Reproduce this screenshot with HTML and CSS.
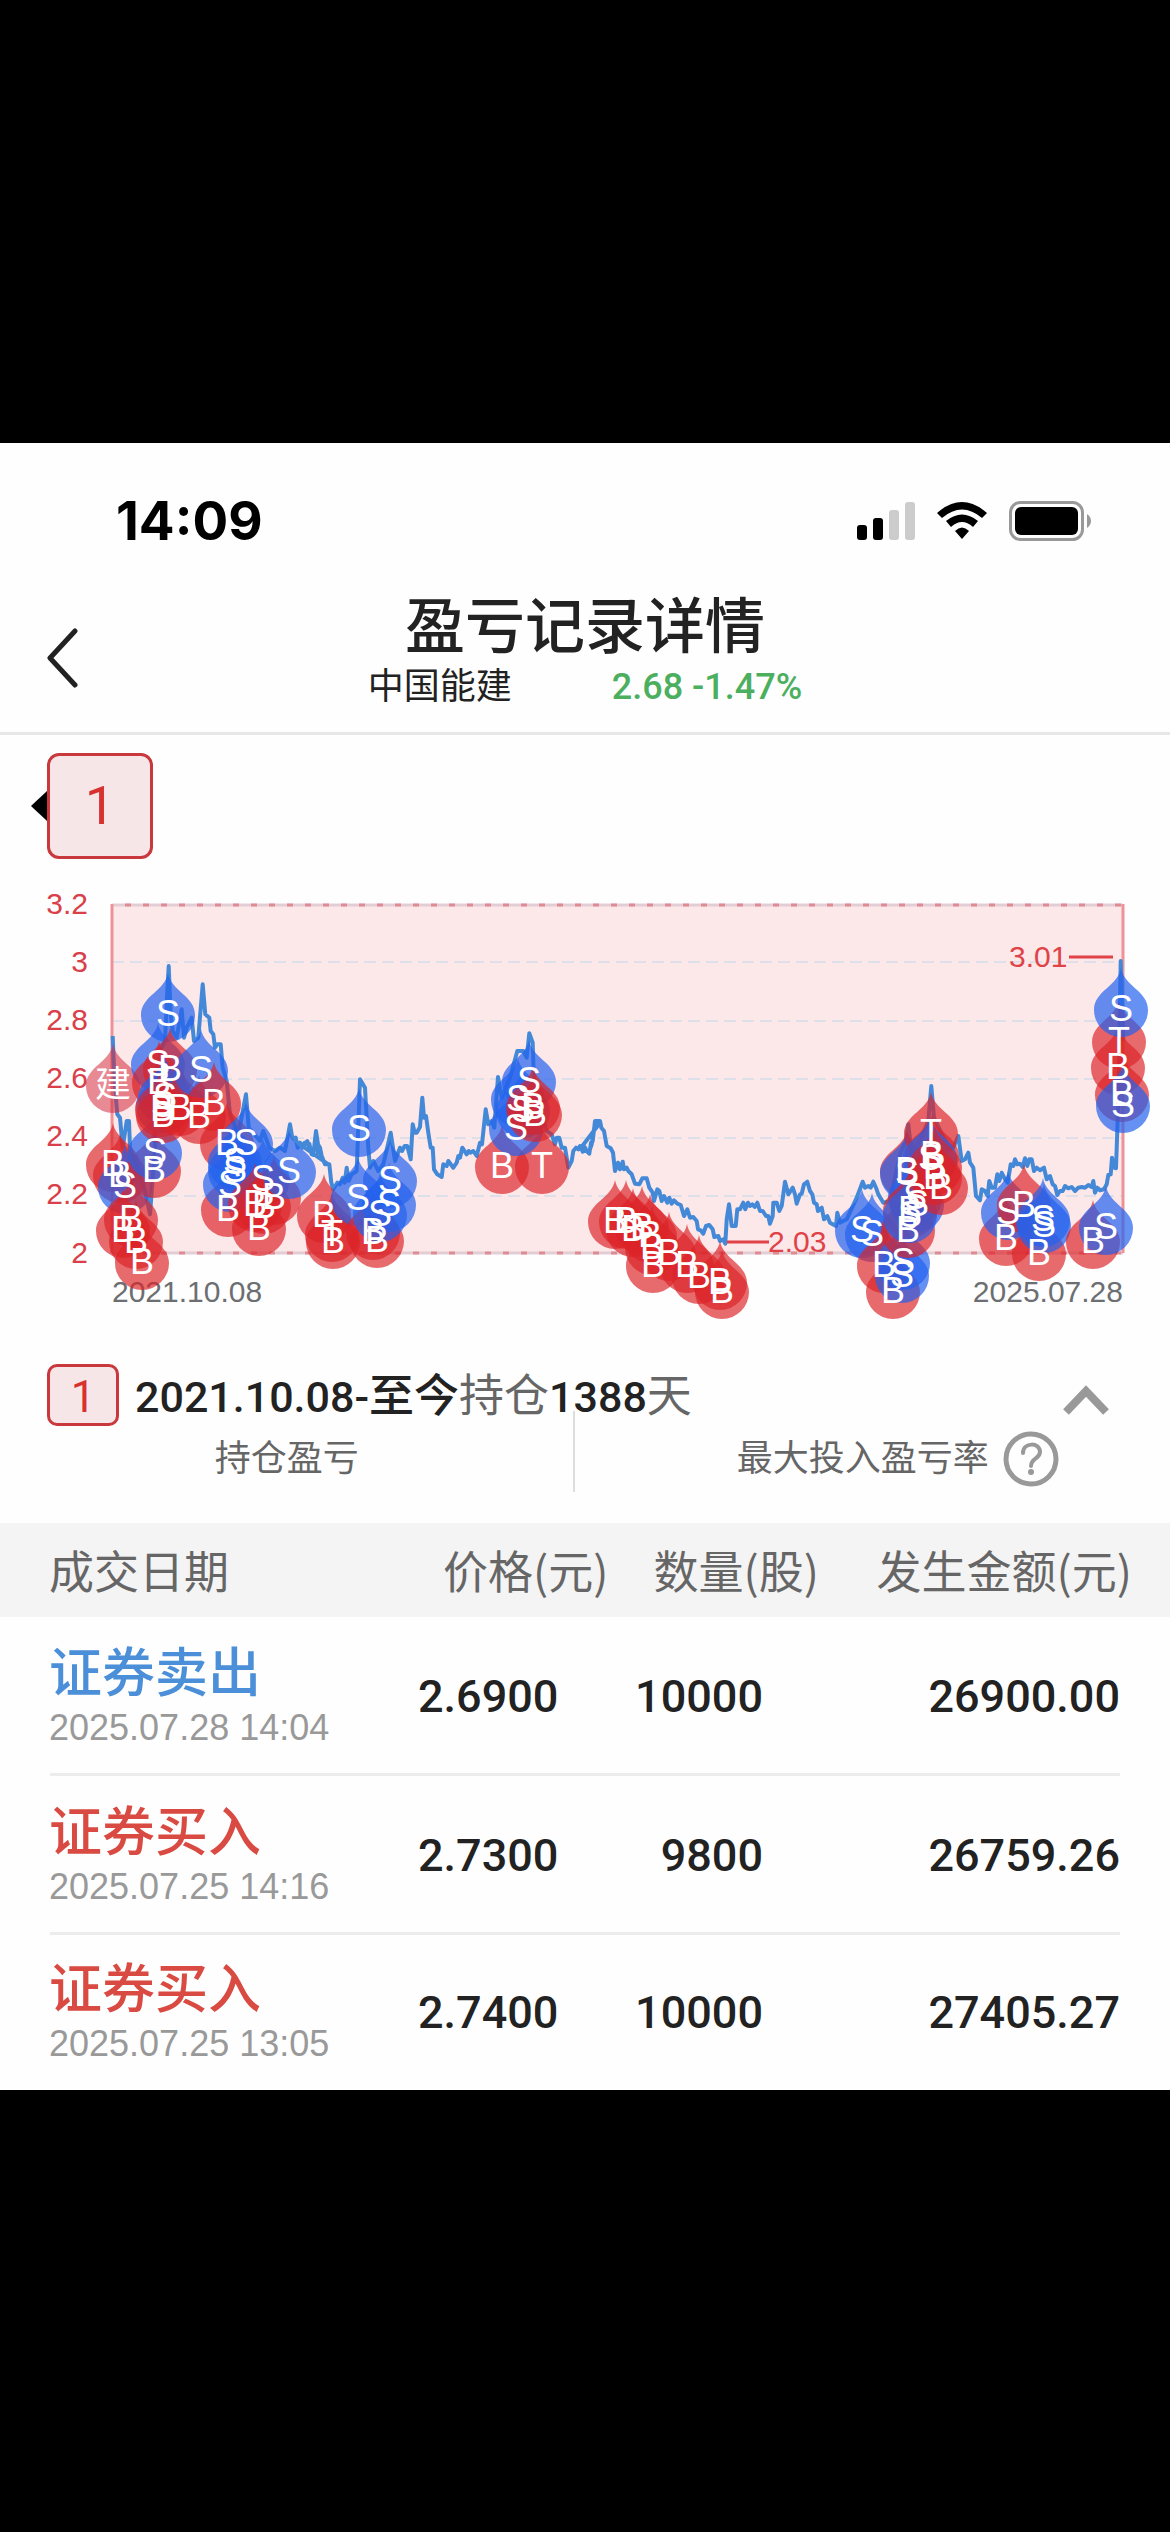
FILE: index.html
```html
<!DOCTYPE html>
<html lang="zh-CN">
<head>
<meta charset="utf-8">
<meta name="viewport" content="width=device-width, initial-scale=1">
<title>盈亏记录详情</title>
<link rel="stylesheet" href="styles.css">
</head>
<body>
<main class="screen">
  <div class="status">
    <span class="clock">14:09</span>
    <div class="status-icons">
      <svg width="58" height="38" viewBox="0 0 58 38" aria-hidden="true">
        <rect x="0" y="23" width="10" height="15" rx="3"/>
        <rect x="16" y="16" width="10" height="22" rx="3"/>
        <rect x="32" y="8" width="10" height="30" rx="3" fill="#ccc"/>
        <rect x="48" y="0" width="10" height="38" rx="3" fill="#ccc"/>
      </svg>
      <svg width="50" height="38" viewBox="0 0 50 38" aria-hidden="true">
        <path d="M0 11 Q25 -11 50 11 L45 16 Q25 -1 5 16Z"/>
        <path d="M9 19 Q25 6 41 19 L36 25 Q25 15 14 25Z"/>
        <path d="M18 29 Q25 22 32 29 L25 37Z"/>
      </svg>
      <svg width="82" height="40" viewBox="0 0 82 40" aria-hidden="true">
        <rect x="1.5" y="1.5" width="72" height="37" rx="10" fill="none" stroke="#999" stroke-width="3"/>
        <rect x="6" y="6" width="63" height="28" rx="6"/>
        <path d="M78 13 Q82 16 82 20 Q82 24 78 27Z" fill="#999"/>
      </svg>
    </div>
  </div>

  <header class="nav">
    <button class="back" aria-label="返回">
      <svg width="32" height="60" viewBox="0 0 32 60" aria-hidden="true"><path d="M29 3 L4 30 L29 57" fill="none" stroke="#222" stroke-width="5" stroke-linecap="round" stroke-linejoin="round"/></svg>
    </button>
    <div class="heading">
      <h1>盈亏记录详情</h1>
      <p class="stock"><span>中国能建</span><span class="quote">2.68 -1.47%</span></p>
    </div>
  </header>

  <div class="periods">
    <svg width="16" height="30" viewBox="0 0 16 30" aria-hidden="true"><path d="M16 0 V30 L0 15Z"/></svg>
    <button class="period">1</button>
  </div>

  <svg class="chart" viewBox="0 870 1170 460" role="img" aria-label="持仓走势">
    <defs>
      <path id="drop" d="M0 -40 C3 -22 27 -17 27 2 A27 27 0 0 1 -27 2 C-27 -17 -3 -22 0 -40Z"/>
    </defs>
    <rect class="plot" x="112" y="903" width="1011" height="349"/>
    <g class="grid">
      <path d="M112 961H1123M112 1020H1123M112 1078H1123M112 1137H1123M112 1195H1123"/>
    </g>
    <path class="edge" d="M112 904H1123M112 1252H1123"/>
    <path class="edge-dash" d="M125 904H1123M125 1252H1123"/>
    <path class="side" d="M112 903V1252M1123 903V1252"/>
    <g class="scale">
      <text x="88" y="913">3.2</text>
      <text x="88" y="971">3</text>
      <text x="88" y="1029">2.8</text>
      <text x="88" y="1087">2.6</text>
      <text x="88" y="1145">2.4</text>
      <text x="88" y="1203">2.2</text>
      <text x="88" y="1262">2</text>
    </g>
    <g class="dates">
      <text x="112" y="1301">2021.10.08</text>
      <text x="1123" y="1301" text-anchor="end">2025.07.28</text>
    </g>
    <polyline class="price" id="price"/>
    <g class="extreme">
      <path d="M1069 956H1113M727 1241H769"/>
      <text x="1009" y="966">3.01</text>
      <text x="768" y="1251">2.03</text>
    </g>
    <g id="drops"></g>
    <g class="letters" id="letters"></g>
  </svg>

  <section class="position">
    <div class="position-head">
      <span class="badge">1</span>
      <h2><b>2021.10.08-<span class="han">至今</span></b><span class="han">持仓</span><b>1388</b><span class="han">天</span></h2>
      <button class="fold" aria-label="收起">
        <svg width="48" height="32" viewBox="0 0 48 32" aria-hidden="true"><path d="M4 28 L24 7 L44 28" fill="none" stroke="#999" stroke-width="8"/></svg>
      </button>
    </div>
    <div class="totals">
      <div class="total">持仓盈亏</div>
      <div class="total total-rate">最大投入盈亏率
        <button class="help" aria-label="说明">
          <svg width="56" height="56" viewBox="0 0 56 56" fill="none" stroke="#999" aria-hidden="true"><circle cx="28" cy="28" r="25" stroke-width="5"/><path d="M20 22 C20 11 37 11 37 21 C37 28 28 27 28 35" stroke-width="4" stroke-linecap="round"/><circle cx="28" cy="41" r="3" fill="#999" stroke="none"/></svg>
        </button>
      </div>
    </div>
  </section>

  <table class="deals">
    <colgroup><col class="c-date"><col class="c-price"><col class="c-count"><col class="c-sum"></colgroup>
    <thead>
      <tr><th>成交日期</th><th>价格(元)</th><th>数量(股)</th><th>发生金额(元)</th></tr>
    </thead>
    <tbody>
      <tr><td><span class="kind sell">证券卖出</span><time>2025.07.28 14:04</time></td><td>2.6900</td><td>10000</td><td>26900.00</td></tr>
      <tr><td><span class="kind buy">证券买入</span><time>2025.07.25 14:16</time></td><td>2.7300</td><td>9800</td><td>26759.26</td></tr>
      <tr><td><span class="kind buy">证券买入</span><time>2025.07.25 13:05</time></td><td>2.7400</td><td>10000</td><td>27405.27</td></tr>
    </tbody>
  </table>
</main>
<script src="chart.js"></script>
</body>
</html>
```

FILE: styles.css
```css
* { box-sizing: border-box; }

body {
  margin: 0;
  min-height: 100vh;
  display: flex;
  flex-direction: column;
  justify-content: center;
  background: #000;
  color: #222;
  font-family: Roboto, "Noto Sans CJK SC", sans-serif;
}

h1, h2, p { margin: 0; font-weight: 400; }

button {
  padding: 0;
  border: 0;
  background: none;
  color: inherit;
  font: inherit;
}

svg { display: block; flex: none; }

.screen { background: #fefefe; }

.status {
  display: flex;
  justify-content: space-between;
  align-items: center;
  padding: 42px 79px 0 116px;
}

.clock {
  color: #000;
  font: 700 53px/72px Inter, sans-serif;
}

.status-icons {
  display: flex;
  align-items: center;
  gap: 22px;
}

.nav {
  display: grid;
  grid-template-columns: 1fr auto 1fr;
  align-items: center;
  padding: 28px 46px 17px;
  border-bottom: 3px solid #e7e7e7;
}

.back {
  justify-self: start;
  padding-top: 16px;
}

.heading { text-align: center; }

h1 {
  font-family: "Noto Sans CJK SC", sans-serif;
  font-size: 60px;
  font-weight: 500;
  line-height: 74px;
}

.stock {
  display: flex;
  justify-content: center;
  gap: 100px;
  font-size: 36px;
  line-height: 56px;
}

.quote { color: #4caf5f; font-weight: 500; }

.periods {
  display: flex;
  align-items: center;
  padding: 18px 31px 12px;
}

.period, .badge {
  border: 3px solid #c8383c;
  background: #f6e6e8;
  color: #d8322f;
  text-align: center;
}

.period {
  width: 106px;
  height: 106px;
  border-radius: 12px;
  font-size: 54px;
}

.chart {
  width: 100%;
  height: auto;
  font-family: "Liberation Sans", "Noto Sans CJK SC", sans-serif;
  font-size: 30px;
}

.plot { fill: #fce7e9; }
.grid { fill: none; stroke: #dde0e9; stroke-width: 2; stroke-dasharray: 12 6; }
.edge { fill: none; stroke: #e3cdd4; stroke-width: 3; }
.edge-dash { fill: none; stroke: #df8b93; stroke-width: 3; stroke-dasharray: 6 12; }
.side { fill: none; stroke: #ef9297; stroke-width: 3; }
.scale { fill: #d9404a; text-anchor: end; }
.dates { fill: #6c6e72; }
.price { fill: none; stroke: #4489d8; stroke-width: 4; stroke-linejoin: round; }
.extreme { fill: #df4348; }
.extreme path { stroke: #df4348; stroke-width: 3; }
.drop-s { fill: #2463ee; fill-opacity: .7; }
.drop-b { fill: #dc2428; fill-opacity: .68; }
.drop-open { fill: #d42a3a; fill-opacity: .55; }
.letters { fill: #fff; font-size: 36px; text-anchor: middle; }

.position { padding: 33px 47px 31px; }

.position-head {
  display: flex;
  align-items: center;
  gap: 16px;
  height: 62px;
}

.badge {
  width: 72px;
  height: 62px;
  border-radius: 10px;
  font-size: 44px;
  line-height: 60px;
}

h2 {
  flex: 1;
  color: #666;
  font-size: 43px;
  line-height: 62px;
}

h2 b { color: #222; font-weight: 500; }
.han { font-family: "Noto Sans CJK SC", sans-serif; font-size: 45px; }
.fold { margin: 10px 13px 0 0; }

.totals {
  display: flex;
  margin: 0 -47px;
  color: #666;
  font-size: 36px;
  line-height: 66px;
}

.total {
  display: flex;
  flex: 1 1 0;
  justify-content: center;
  align-items: center;
  height: 66px;
}

.total:first-child { flex-grow: 0; flex-basis: 49%; }

.total-rate {
  gap: 14px;
  height: 81px;
  margin-top: -15px;
  padding: 15px 0 0 50px;
  border-left: 2px solid #ddd;
}

.deals {
  width: 100%;
  table-layout: fixed;
  border-collapse: collapse;
}

.c-date { width: 31%; }
.c-price { width: 21%; }
.c-count { width: 18%; }
.c-sum { width: 30%; }

.deals th {
  height: 94px;
  padding: 0;
  background: #f4f4f4;
  color: #666;
  font: 400 45px/60px "Noto Sans CJK SC", sans-serif;
  text-align: right;
}

.deals th:first-child, .deals td:first-child { padding-left: 49px; text-align: left; }
.deals th:last-child { padding-right: 38px; }

.deals td {
  height: 159px;
  padding: 0 50px 0 0;
  font-size: 45px;
  font-weight: 500;
  text-align: right;
}

.deals td:nth-child(3) { padding-right: 56px; }
.deals td:first-child { padding-right: 0; }

.deals tbody tr:not(:last-child) {
  background: linear-gradient(#ececec, #ececec) no-repeat 50% 100% / calc(100% - 100px) 3px;
}

.deals tr:last-child td { height: 155px; }

.kind {
  display: block;
  font-size: 53px;
  line-height: 64px;
}

.sell { color: #4a8fd8; }
.buy { color: #d94b42; }

time {
  display: block;
  color: #999;
  font: 400 36px/44px "Liberation Sans", sans-serif;
  white-space: nowrap;
}
```

FILE: chart.js
```js
const NS = 'http://www.w3.org/2000/svg';

// Price trace: each run has an origin and its points in thirds of a unit.
const runs = [
  [30, 880, [248,465,252,560,255,620,262,700,270,710,278,800,290,720,297,720,300,800,320,860,345,930,360,1000,375,800,380,560,395,500,405,480,412,330,416,255,422,400,428,450,440,470,455,385,462,470,470,440,485,410,492,480,505,470,518,310,526,400,538,410,542,450,550,460,555,500,562,490,572,490,578,560,590,600,600,700,625,760,648,640,656,740,690,780,700,750,718,800,735,810,750,800,765,810,780,730,786,765,792,775,797,770,803,800,810,785,820,795,832,780,838,800,850,822,858,750,864,790,870,800,875,825,885,850,895,850]],
  [300, 1000, [0,430,8,440,14,425,20,430,28,428,35,460,41,450,48,395,54,455,60,455,75,490,88,490,94,545,100,565,112,545,120,550,128,530,134,545,140,500,146,540,155,520,170,510,180,235,195,260,205,440,210,500,220,480,235,510,250,490,272,395,285,480,300,440,306,450,314,435,322,435,332,475,338,370,344,395,350,395,360,378,367,290,372,350,378,345,385,395,392,440,398,440,402,505,412,520,425,528,430,490,440,495,445,480,452,490,460,500,470,485,475,465,480,470,487,440,500,460,506,450,512,455,520,450,530,465,540,425,546,430,557,325,565,370,575,360,583,380,594,228,605,290,630,230,652,150,670,150,680,170,688,97,698,125,702,250,720,320,740,390,755,400,765,430,770,410,778,410,785,440,795,440,805,500,815,480,820,450,828,440,835,445,840,435,850,450,868,450,875,430,885,365,900,365]],
  [580, 1060, [3,260,8,272,14,258,20,270,28,278,33,245,38,240,45,180,60,180,64,200,72,210,80,255,92,262,99,275,105,330,114,305,120,325,128,302,132,325,140,320,145,330,155,340,165,368,178,370,187,352,200,352,208,380,218,395,222,420,232,385,238,390,245,420,252,405,262,425,268,410,275,428,282,418,292,428,302,432,312,465,322,445,330,470,340,468,350,480,354,505,362,508,370,518,378,495,388,492,398,505,403,528,415,525,420,540,430,535,436,548,440,475,447,430,455,495,467,495,472,445,480,445,490,425,496,445,504,425,510,435,517,430,524,438,532,425,540,450,548,450,558,465,565,465,570,488,578,465,580,425,590,425,598,450,605,435,615,362,625,400,638,380,645,400,650,428,660,400,665,398,672,370,682,362,690,390,697,400,702,425,710,430,714,450,725,440,732,475,742,465,750,485,768,495,772,455,780,485,790,480,800,475,830,410,848,362,855,380,865,375,872,380,880,362,888,380,895,400]],
  [820, 900, [190,905,210,900,240,760,258,720,265,670,275,760,300,720,325,660,334,555,342,650,380,730,400,740,415,705,425,780,435,775,445,755,450,785,460,800,468,885,480,898,485,865,495,870,503,885,508,840,515,860,525,860,532,820,538,840,545,815,555,835,563,845,572,790,580,795,585,775,592,790,600,788,608,798,615,772,622,795,628,775,635,775,642,810,650,800,660,808,672,800,680,835,690,825,698,850,705,855,712,882,720,870,728,870,735,855,745,862,755,858,765,870,775,860,785,858,795,860,805,852,815,858,820,840,825,875,832,860,840,868,852,865,860,850,865,822,872,820,876,770,882,800,888,802,895,600,902,180,906,300,910,420]]
];

const trace = runs.flatMap(([ox, oy, p]) => {
  const out = [];
  for (let i = 0; i < p.length; i += 2) out.push((ox + p[i] / 3).toFixed(1) + ',' + (oy + p[i + 1] / 3).toFixed(1));
  return out;
});
document.getElementById('price').setAttribute('points', trace.join(' '));

// Trades: B buy, S sell, T both, 建 opening.
const trades = `
建 113 1083,B 113 1162,B 120 1173,S 125 1184,B 131 1217,B 123 1228,B 136 1239,B 142 1260,
B 154 1168,S 155 1150,S 168 1012,S 158 1062,B 170 1067,B 159 1080,S 165 1095,S 163 1103,B 162 1107,B 163 1113,
B 180 1106,B 199 1114,S 201 1068,B 214 1101,
B 227 1141,B 228 1207,S 246 1141,S 235 1160,S 235 1168,S 230 1182,
S 263 1177,B 274 1195,B 255 1202,B 264 1204,B 259 1226,S 289 1169,
B 324 1213,T 332 1232,B 333 1239,S 359 1127,S 358 1196,B 377 1238,B 373 1230,S 390 1178,S 389 1202,S 380 1212,
B 502 1164,T 542 1164,S 529 1079,S 518 1097,S 523 1108,S 516 1126,B 533 1105,B 535 1112,
B 615 1219,B 626 1219,B 633 1227,B 642 1225,B 650 1233,B 652 1245,B 653 1263,B 669 1251,B 687 1263,B 699 1274,B 720 1280,B 722 1289,
S 862 1228,S 872 1232,B 893 1289,B 884 1263,S 903 1260,S 902 1273,
B 908 1228,B 907 1169,S 907 1171,S 915 1195,S 917 1202,B 910 1208,S 910 1213,
T 931 1131,B 932 1153,S 930 1156,B 935 1165,B 935 1175,B 941 1185,
B 1006 1236,S 1008 1210,B 1024 1203,B 1039 1251,S 1043 1217,S 1044 1223,B 1093 1239,S 1106 1225,
T 1119 1039,B 1118 1065,S 1121 1007,B 1122 1092,S 1123 1103`
  .split(',').map(t => t.trim().split(' '));

const kinds = { S: 'drop-s', B: 'drop-b', T: 'drop-b', 建: 'drop-open' };
for (const [kind, x, y] of trades) {
  const drop = document.createElementNS(NS, 'use');
  drop.setAttribute('href', '#drop');
  drop.setAttribute('class', kinds[kind]);
  drop.setAttribute('x', x);
  drop.setAttribute('y', y);
  document.getElementById('drops').append(drop);

  const letter = document.createElementNS(NS, 'text');
  letter.setAttribute('x', x);
  letter.setAttribute('y', +y + 13);
  letter.textContent = kind;
  document.getElementById('letters').append(letter);
}
```
